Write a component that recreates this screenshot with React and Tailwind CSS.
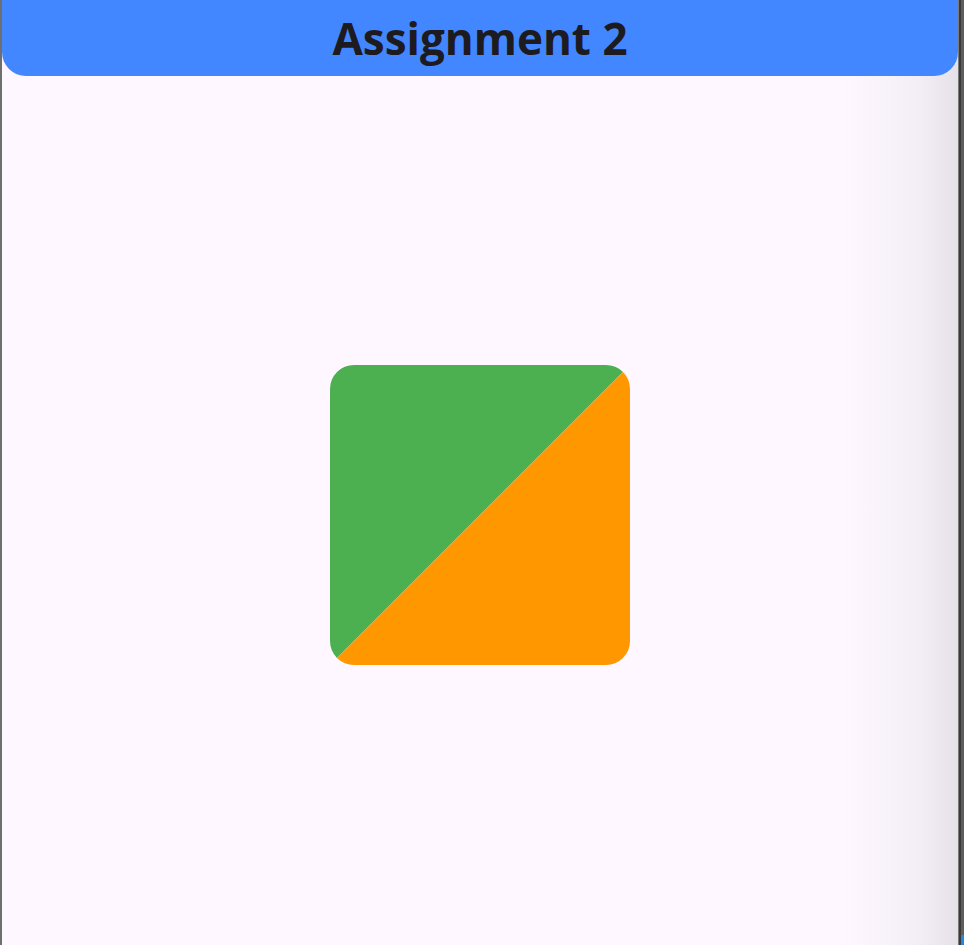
export default function App() {
  return (
    <div className="flex h-[945px] w-[964px] overflow-hidden bg-[#fef7ff]">
      <div className="w-[2px] shrink-0 bg-[#6f6f6f]" />
      <div className="relative flex flex-1 flex-col bg-[linear-gradient(to_right,#fef7ff_0%,#fef7ff_88%,#f3eef5_96%,#e6e1e8_100%)]">
        <div className="flex h-[76px] items-center justify-center rounded-b-[24px] bg-[#4287ff]">
          <span
            className="text-[44px] font-bold leading-none text-[#1d1b20]"
            style={{ fontFamily: '"Open Sans", "Noto Sans", sans-serif' }}
          >
            Assignment 2
          </span>
        </div>
        <div className="flex flex-1 items-center justify-center pt-[9px]">
          <div className="h-[300px] w-[300px] overflow-hidden rounded-[24px]">
            <svg width="300" height="300" viewBox="0 0 300 300" className="block">
              <polygon points="0,0 300,0 0,300" fill="#4caf50" />
              <polygon points="300,0 300,300 0,300" fill="#ff9800" />
            </svg>
          </div>
        </div>
      </div>
      <div className="flex w-[6px] shrink-0">
        <div className="w-[1px] bg-[#7a7a7a]" />
        <div className="w-[2px] bg-[#3a3a3a]" />
        <div className="flex w-[3px] flex-col">
          <div className="flex-1 bg-[#5e5e5e]" />
          <div className="h-[10px] bg-[#1e88e5]" />
        </div>
      </div>
    </div>
  );
}
